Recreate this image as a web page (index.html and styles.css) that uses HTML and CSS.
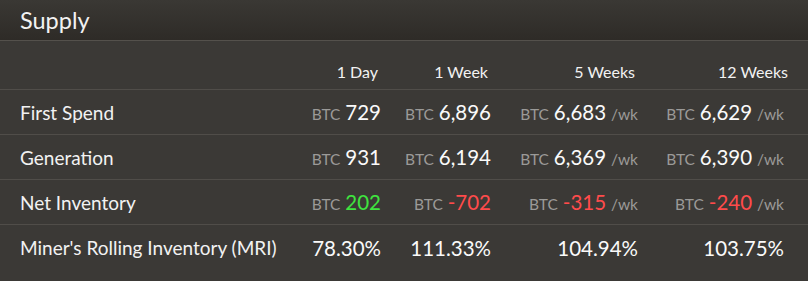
FILE: index.html
```html
<!DOCTYPE html>
<html>
<head>
<meta charset="utf-8">
<link rel="stylesheet" href="styles.css">
</head>
<body>
<div class="panel">
  <div class="title">Supply</div>
  <div class="table">
    <div class="row head">
      <div></div>
      <div class="c">1 Day</div>
      <div class="c">1 Week</div>
      <div class="c">5 Weeks</div>
      <div class="c">12 Weeks</div>
    </div>
    <div class="row">
      <div class="label">First Spend</div>
      <div class="c"><span class="u">BTC</span> <span class="v">729</span></div>
      <div class="c"><span class="u">BTC</span> <span class="v">6,896</span></div>
      <div class="c"><span class="u">BTC</span> <span class="v">6,683</span> <span class="u wk">/wk</span></div>
      <div class="c"><span class="u">BTC</span> <span class="v">6,629</span> <span class="u wk">/wk</span></div>
    </div>
    <div class="row">
      <div class="label">Generation</div>
      <div class="c"><span class="u">BTC</span> <span class="v">931</span></div>
      <div class="c"><span class="u">BTC</span> <span class="v">6,194</span></div>
      <div class="c"><span class="u">BTC</span> <span class="v">6,369</span> <span class="u wk">/wk</span></div>
      <div class="c"><span class="u">BTC</span> <span class="v">6,390</span> <span class="u wk">/wk</span></div>
    </div>
    <div class="row">
      <div class="label">Net Inventory</div>
      <div class="c"><span class="u">BTC</span> <span class="v pos">202</span></div>
      <div class="c"><span class="u">BTC</span> <span class="v neg">-702</span></div>
      <div class="c"><span class="u">BTC</span> <span class="v neg">-315</span> <span class="u wk">/wk</span></div>
      <div class="c"><span class="u">BTC</span> <span class="v neg">-240</span> <span class="u wk">/wk</span></div>
    </div>
    <div class="row last">
      <div class="label">Miner's Rolling Inventory (MRI)</div>
      <div class="c"><span class="v">78.30%</span></div>
      <div class="c"><span class="v">111.33%</span></div>
      <div class="c"><span class="v">104.94%</span></div>
      <div class="c"><span class="v">103.75%</span></div>
    </div>
  </div>
</div>
</body>
</html>
```
FILE: styles.css
```css
html, body {
  margin: 0;
  padding: 0;
  background: #3b3936;
}
body {
  font-family: Lato, "Noto Sans", sans-serif;
  color: #f2f2f2;
}
.panel {
  width: 808px;
  height: 281px;
  background: #3b3936;
}
.title {
  height: 40px;
  padding: 6px 0 0 20px;
  box-sizing: border-box;
  font-size: 23.5px;
  line-height: 28px;
  background: linear-gradient(#3a3834, #2e2b27);
  border-bottom: 1px solid #54514c;
  height: 41px;
}
.row {
  display: grid;
  grid-template-columns: 1fr 100px 110px 147px 150px;
  align-items: center;
  box-sizing: border-box;
  height: 45px;
  padding: 0 20px;
  border-bottom: 1px solid #504d49;
  font-size: 19px;
}
.row.head {
  height: 49px;
  font-size: 16px;
  padding-top: 13px;
}
.row.head .c {
  padding-right: 3px;
}
.row.head .c:last-child {
  padding-right: 0;
}
.row:not(.head) .c:last-child {
  padding-right: 4px;
}
.row.last {
  border-bottom: none;
}
.c {
  text-align: right;
  white-space: nowrap;
}
.u {
  color: #9b9a98;
  font-size: 15.5px;
}
.v {
  font-size: 20.5px;
  color: #fafafa;
}
.v.pos { color: #3fe43f; }
.v.neg { color: #ff4b4b; }
```
